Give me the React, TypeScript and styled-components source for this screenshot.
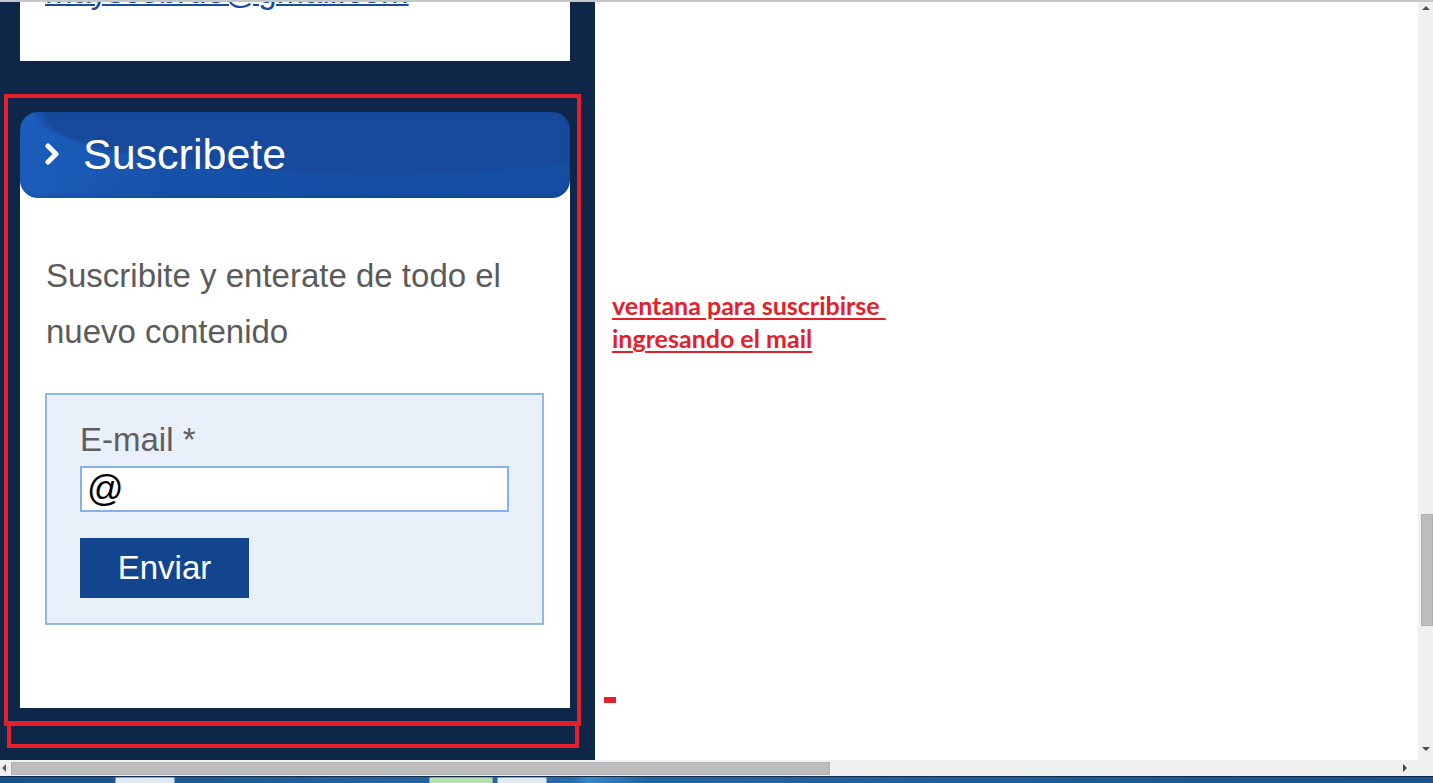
import styled, { createGlobalStyle } from 'styled-components';

const GlobalStyle = createGlobalStyle`
  html, body {
    margin: 0;
    padding: 0;
    overflow: hidden;
    background: #fff;
  }
  * { box-sizing: border-box; }
`;

const Screen = styled.div`
  width: 1433px;
  height: 783px;
  display: flex;
  flex-direction: column;
  font-family: 'Liberation Sans', Arial, sans-serif;
`;

const TopEdge = styled.div`
  height: 2px;
  background: #c4c6c8;
  flex-shrink: 0;
`;

const Viewport = styled.div`
  flex: 1;
  min-height: 0;
  display: flex;
`;

const Page = styled.div`
  flex: 1;
  display: flex;
  min-width: 0;
`;

const Sidebar = styled.aside`
  width: 595px;
  flex-shrink: 0;
  background: #0e2749;
  position: relative;
  display: flex;
  flex-direction: column;
  padding: 0 25px 0 20px;
`;

const LinkCard = styled.div`
  height: 59px;
  background: #fff;
  overflow: hidden;
  padding-left: 25px;
`;

const MailLink = styled.a`
  display: block;
  margin-top: -26px;
  font-size: 33px;
  line-height: 32px;
  color: #1b4c9c;
  text-decoration: underline;
  text-decoration-thickness: 2px;
  white-space: nowrap;
`;

const WidgetCard = styled.section`
  margin-top: 51px;
  height: 596px;
  background: linear-gradient(to bottom, transparent 40px, #fff 40px);
  display: flex;
  flex-direction: column;
`;

const Banner = styled.header`
  height: 86px;
  border-radius: 18px;
  display: flex;
  align-items: center;
  gap: 22px;
  padding: 0 0 2px 25px;
  background:
    radial-gradient(ellipse 340px 64px at 64% 0%, #17499c 0%, #17499c 96%, rgba(23, 73, 156, 0) 100%),
    linear-gradient(100deg, #1c5ebb 0%, #1651aa 30%, #144da1 100%);
  box-shadow: inset 0 -2px 4px rgba(0, 0, 0, 0.1);
`;

const Chevron = styled.svg`
  width: 16px;
  height: 24px;
  flex-shrink: 0;
`;

const BannerTitle = styled.h2`
  margin: 0;
  font-size: 43px;
  font-weight: 400;
  color: #fff;
`;

const WidgetBody = styled.div`
  padding: 50px 26px 0 25px;
`;

const Intro = styled.p`
  margin: 0 0 0 1px;
  font-size: 33px;
  line-height: 56px;
  color: #5b5b5b;
`;

const FormBox = styled.form`
  margin-top: 33px;
  height: 232px;
  background: #eaf0fa;
  border: 2px solid #8fb8e4;
  padding: 25px 0 0 33px;
  display: flex;
  flex-direction: column;
  align-items: flex-start;
`;

const FieldLabel = styled.label`
  font-size: 33px;
  line-height: 40px;
  color: #5f5f5f;
`;

const EmailInput = styled.div`
  margin-top: 6px;
  width: 429px;
  height: 46px;
  background: #fff;
  border: 2px solid #86b0e6;
  padding-left: 5px;
  font-size: 36px;
  line-height: 42px;
  color: #000;
`;

const SendButton = styled.button`
  margin-top: 26px;
  width: 169px;
  height: 60px;
  border: none;
  background: #13458f;
  color: #fff;
  font-family: 'Liberation Sans', Arial, sans-serif;
  font-size: 33px;
  padding: 0;
`;

const Frame = styled.div<{ $left: number; $top: number; $w: number; $h: number }>`
  position: absolute;
  left: ${p => p.$left}px;
  top: ${p => p.$top}px;
  width: ${p => p.$w}px;
  height: ${p => p.$h}px;
  border: 4px solid #e41f2b;
  pointer-events: none;
`;

const Content = styled.main`
  flex: 1;
  background: #fff;
  position: relative;
  padding: 287px 0 0 17px;
`;

const Note = styled.p`
  margin: 0;
  font-family: Lato, 'Noto Sans', sans-serif;
  font-weight: 700;
  font-size: 25px;
  line-height: 33px;
  color: #e4202a;
  text-decoration: underline;
  text-decoration-thickness: 2px;
  text-underline-offset: 3px;
  white-space: pre;
`;

const RedMark = styled.span`
  position: absolute;
  left: 9px;
  top: 695px;
  width: 12px;
  height: 6px;
  background: #e41f2b;
`;

const VScroll = styled.div`
  width: 15px;
  flex-shrink: 0;
  background: #f0f0f0;
  display: flex;
  flex-direction: column;
  align-items: center;
  padding: 4px 0 3px;
`;

const ScrollGap = styled.div<{ $size: number }>`
  flex: 0 0 ${p => p.$size}px;
`;

const Grow = styled.div`
  flex: 1;
`;

const VThumb = styled.div`
  width: 12px;
  height: 112px;
  margin-left: 2px;
  background: #bdbdbd;
  border: 1px solid #b0b0b0;
`;

const Arrow = styled.div<{ $dir: 'up' | 'down' | 'left' | 'right' }>`
  width: 0;
  height: 0;
  border: 4px solid transparent;
  ${p =>
    p.$dir === 'up'
      ? 'border-bottom: 4px solid #505050; border-top-width: 0;'
      : p.$dir === 'down'
      ? 'border-top: 4px solid #505050; border-bottom-width: 0;'
      : p.$dir === 'left'
      ? 'border-right: 4px solid #606060; border-left-width: 0;'
      : 'border-left: 4px solid #404040; border-right-width: 0;'}
`;

const HScroll = styled.div`
  height: 16px;
  flex-shrink: 0;
  background: #f0f0f0;
  display: flex;
  align-items: center;
  padding: 0 26px 0 2px;
`;

const HThumb = styled.div`
  width: 819px;
  height: 13px;
  margin-left: 5px;
  background: #bdbdbd;
  border: 1px solid #b2b2b2;
`;

const Taskbar = styled.div`
  height: 7px;
  flex-shrink: 0;
  background: linear-gradient(to right, #1c4f86 0%, #2a6aa6 40%, #3c86c2 41%, #2664a0 45%, #1d5189 100%);
  border-top: 1px solid #0d2b4e;
  display: flex;
  gap: 4px;
  padding-left: 115px;
`;

const TaskButton = styled.div<{ $w: number; $tint: string }>`
  width: ${p => p.$w}px;
  background: ${p => p.$tint};
  border: 1px solid #7fa6cc;
  border-bottom: none;
  border-radius: 2px 2px 0 0;
`;

const TaskSpacer = styled.div<{ $w: number }>`
  width: ${p => p.$w}px;
`;

export default function App() {
  return (
    <Screen>
      <GlobalStyle />
      <TopEdge />
      <Viewport>
        <Page>
          <Sidebar>
            <LinkCard>
              <MailLink href="#">mayscobrde@gmail.com</MailLink>
            </LinkCard>

            <WidgetCard>
              <Banner>
                <Chevron viewBox="0 0 16 24">
                  <path d="M3 4 L11 12 L3 20" fill="none" stroke="#fff" strokeWidth="5" strokeLinecap="round" strokeLinejoin="round" />
                </Chevron>
                <BannerTitle>Suscribete</BannerTitle>
              </Banner>
              <WidgetBody>
                <Intro>
                  Suscribite y enterate de todo el
                  <br />
                  nuevo contenido
                </Intro>
                <FormBox onSubmit={e => e.preventDefault()}>
                  <FieldLabel>E-mail *</FieldLabel>
                  <EmailInput>@</EmailInput>
                  <SendButton type="button">Enviar</SendButton>
                </FormBox>
              </WidgetBody>
            </WidgetCard>

            <Frame $left={4} $top={92} $w={577} $h={632} />
            <Frame $left={7} $top={719} $w={572} $h={27} />
          </Sidebar>

          <Content>
            <Note>{'ventana para suscribirse \ningresando el mail'}</Note>
            <RedMark />
          </Content>
        </Page>

        <VScroll>
          <Arrow $dir="up" />
          <ScrollGap $size={504} />
          <VThumb />
          <Grow />
          <Arrow $dir="down" />
          <ScrollGap $size={6} />
        </VScroll>
      </Viewport>

      <HScroll>
        <Arrow $dir="left" />
        <HThumb />
        <Grow />
        <Arrow $dir="right" />
      </HScroll>

      <Taskbar>
        <TaskButton $w={60} $tint="#dfe9f3" />
        <TaskSpacer $w={246} />
        <TaskButton $w={64} $tint="#b9e0b0" />
        <TaskButton $w={50} $tint="#dfe9f3" />
      </Taskbar>
    </Screen>
  );
}
